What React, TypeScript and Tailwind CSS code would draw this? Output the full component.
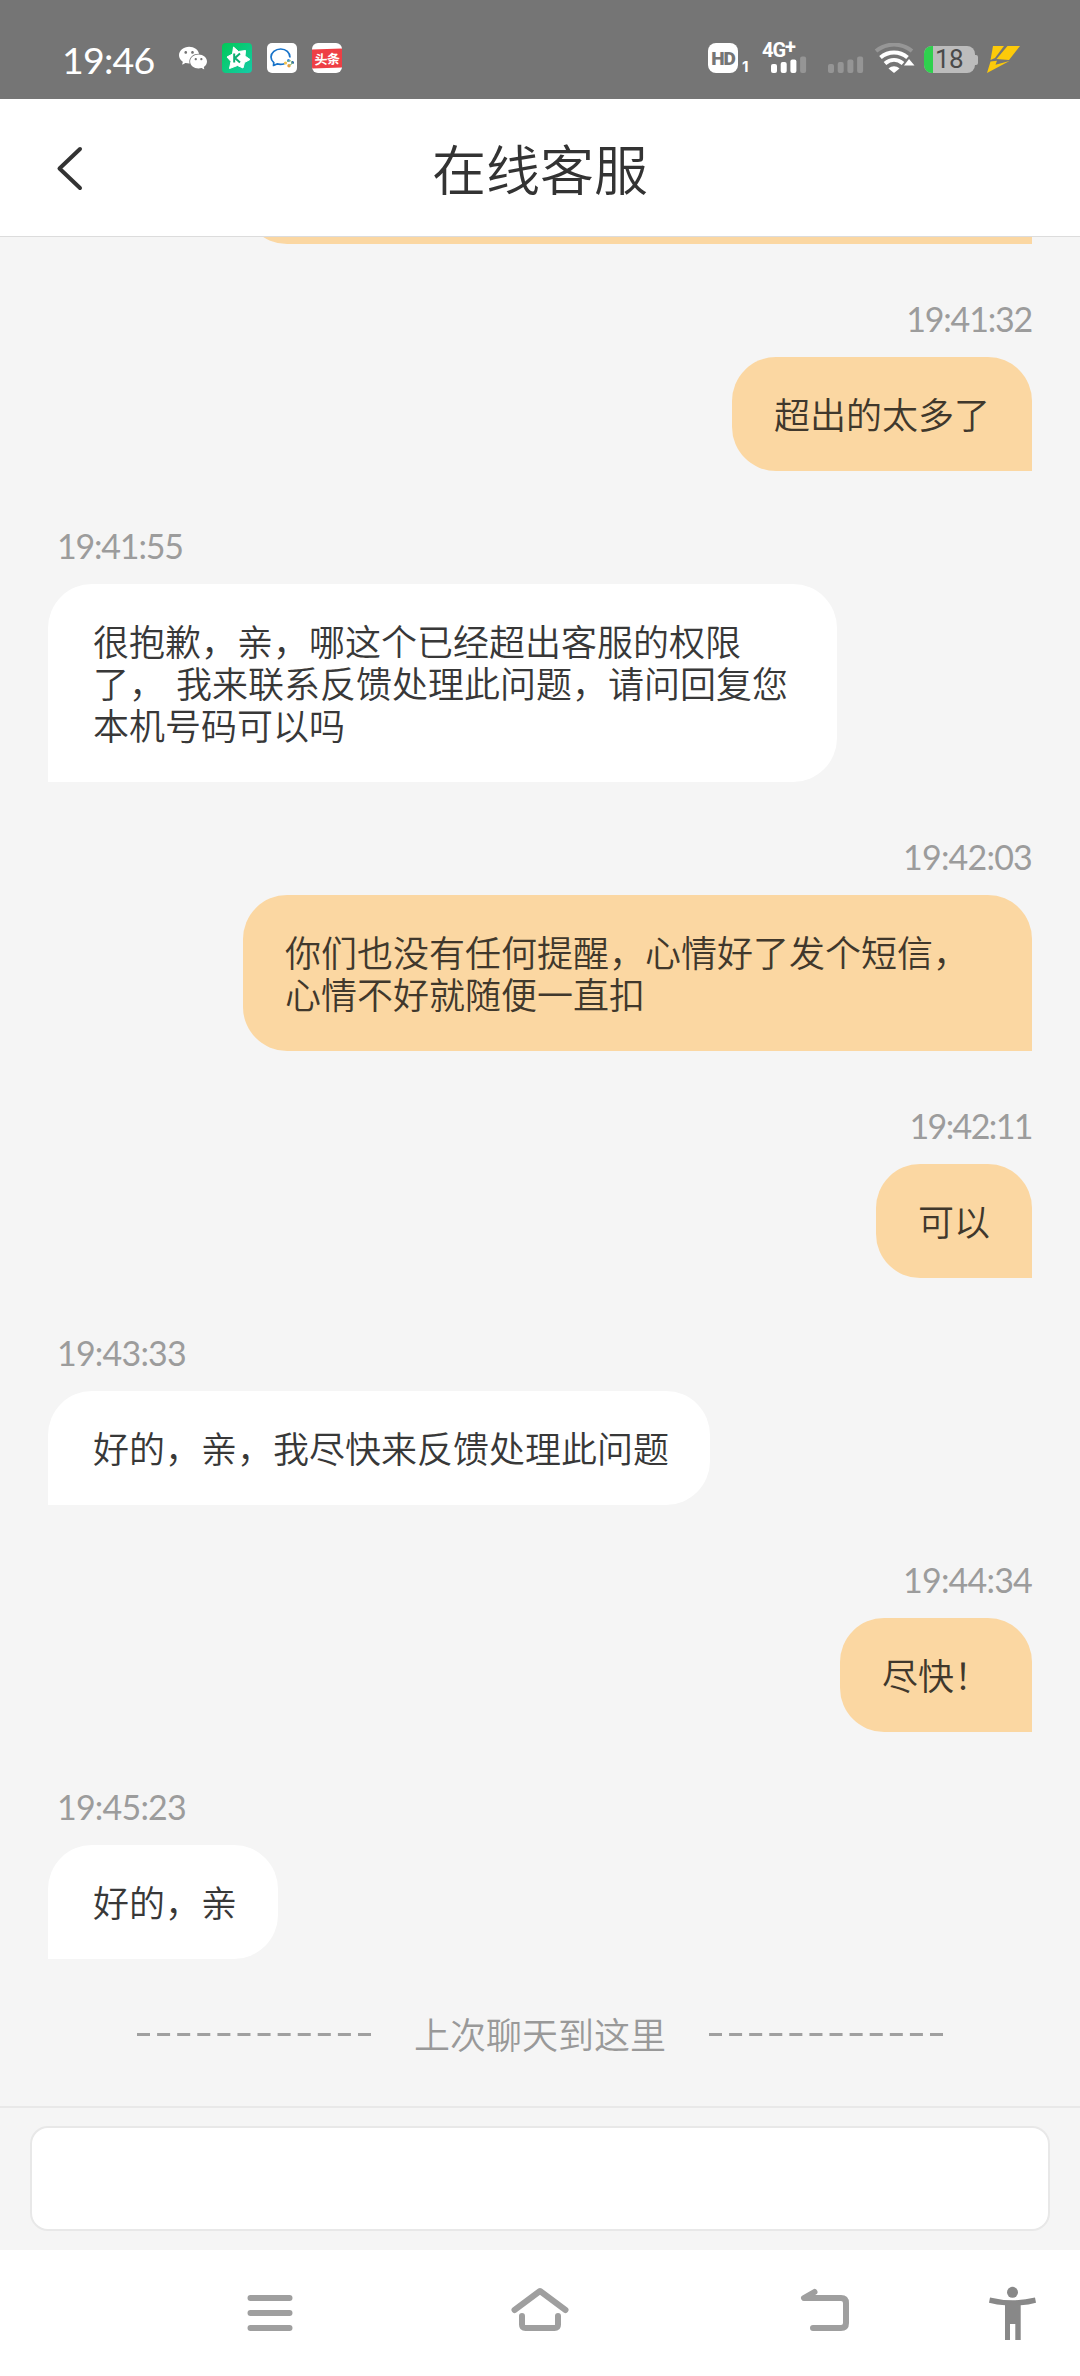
import clsx from "clsx";
import { AiFillWechat } from "react-icons/ai";

type Message = {
  time: string;
  text: string;
  mine?: boolean;
  tracking?: string;
};

const messages: Message[] = [
  { time: "19:41:32", text: "超出的太多了", mine: true, tracking: "tracking-[-1.2px]" },
  { time: "19:41:55", text: "很抱歉，亲，哪这个已经超出客服的权限了， 我来联系反馈处理此问题，请问回复您本机号码可以吗", tracking: "tracking-[-1.2px]" },
  { time: "19:42:03", text: "你们也没有任何提醒，心情好了发个短信，心情不好就随便一直扣", mine: true },
  { time: "19:42:11", text: "可以", mine: true, tracking: "tracking-[-1.6px]" },
  { time: "19:43:33", text: "好的，亲，我尽快来反馈处理此问题" },
  { time: "19:44:34", text: "尽快！", mine: true },
  { time: "19:45:23", text: "好的，亲" },
];

function AppIcons() {
  return (
    <div className="flex items-center gap-[15px]">
      <AiFillWechat className="size-[32px] -mr-[2px] text-white" />
      <svg width="30" height="30" viewBox="0 0 30 30">
        <defs>
          <linearGradient id="green" x1="0" y1="0" x2="1" y2="1">
            <stop offset="0" stopColor="#02c957" />
            <stop offset="1" stopColor="#16cba8" />
          </linearGradient>
        </defs>
        <rect width="30" height="30" rx="4" fill="url(#green)" />
        <path
          d="M11.500 4l5 4.500 7-1-.5 5.500 5 3.500-5.500 3-1.500 5.500-5.500-2.500-8 3 1.500-7-4-4.500 5.500-3z"
          fill="#fff"
          stroke="#fff"
          strokeWidth="1"
          strokeLinejoin="round"
        />
        <path d="M12.200 10.500v9M18 10.500l-5 4.500 5 4.500" fill="none" stroke="#0cae72" strokeWidth="2" />
      </svg>
      <svg width="30" height="30" viewBox="0 0 30 30">
        <rect width="30" height="30" rx="5" fill="#fff" />
        <path
          d="M23 14.500c0-5-4-8.500-9.300-8.500S4 9.600 4 14c0 2.500 1.200 4.300 2.800 5.700L6.500 22.500l3.500-1.600c3 .8 5 .6 7.500-.2"
          fill="none"
          stroke="#1873c9"
          strokeWidth="1.700"
          strokeLinejoin="round"
        />
        <circle cx="21.500" cy="17.500" r="1.500" fill="#2f86dd" />
        <circle cx="25.500" cy="19.500" r="1.500" fill="#1f5fa8" />
        <circle cx="18.500" cy="20" r="1.600" fill="#f2c14b" />
        <circle cx="22" cy="22.800" r="1.700" fill="#ec9c3c" />
        <path d="M20 18.500l3.500-1 2 3-3.500 2" fill="none" stroke="#8fc27a" strokeWidth="1" />
      </svg>
      <div className="flex h-[30px] w-[30px] items-center overflow-hidden rounded-[6px] bg-white">
        <div className="flex h-[19px] w-full -skew-y-2 items-center justify-center bg-[#ee3f45] text-[13px] leading-none font-bold tracking-[-0.5px] text-white">
          头条
        </div>
      </div>
    </div>
  );
}

function SignalBars({ active }: { active: number }) {
  const heights = [9, 11, 13.5, 16.5];
  return (
    <svg width="36" height="17" viewBox="0 0 36 17">
      {heights.map((h, i) => (
        <rect
          key={h}
          x={i * 9.7}
          y={17 - h}
          width="6"
          height={h}
          rx="2"
          fill={i < active ? "#fff" : "#959595"}
        />
      ))}
    </svg>
  );
}

function StatusBar() {
  return (
    <div className="flex h-[99px] items-center justify-between bg-[#757575] pt-[17px] pr-[60px] pl-[62px]">
      <div className="flex items-center">
        <span className="mt-[3px] w-[115px] font-[Lato,sans-serif] text-[37.500px] leading-none font-normal tracking-[-0.8px] text-white">
          19:46
        </span>
        <AppIcons />
      </div>

      <div className="flex h-[30px] items-end">
        <div className="flex h-[30px] w-[30px] items-center justify-center rounded-[8px] bg-white font-[Roboto,sans-serif] text-[19px] leading-none font-black tracking-[-1px] text-[#757575]">
          HD
        </div>
        <span className="ml-[4px] w-[10px] font-[Inter,sans-serif] text-[15px] leading-[13px] font-bold text-white">1</span>
        <div className="ml-[10px] flex h-[30px] w-[46px] flex-col justify-between">
          <span className="font-[Roboto,sans-serif] text-[20px] leading-[14px] font-bold tracking-[-1px] text-white">
            4G<span className="relative -top-[3px]">+</span>
          </span>
          <div className="-mt-[4px] ml-[9px]">
            <SignalBars active={3} />
          </div>
        </div>
        <div className="ml-[20px]">
          <SignalBars active={0} />
        </div>
        {/* wifi */}
        <svg className="ml-[10px]" width="42" height="30" viewBox="0 0 42 30" fill="none" strokeWidth="4">
          <path d="M2 8C13 -.6 27 -.6 38 8" stroke="#969696" />
          <path d="M6.500 14.500C14.500 7.800 25.500 7.800 33.500 14.500" stroke="#fff" />
          <path d="M11 20.500c5.500-4.800 12.500-4.800 18 0" stroke="#fff" />
          <path d="M14.500 25.500c3.500-3 7.500-3 11 0L20 30z" fill="#fff" />
          <path d="M30 22.500l5-6.500 5.500 6.500z" fill="#fff" />
        </svg>
        {/* battery */}
        <div className="ml-[8px] flex h-[30px] items-center">
          <div className="mt-[3px] flex h-[27px] w-[51px] items-center rounded-[8px] bg-[#bcbcbc]">
            <div className="h-full w-[9px] rounded-l-[8px] bg-[#2fd14e]" />
            <span className="ml-[2px] font-[Roboto,sans-serif] text-[26px] leading-[27px] font-normal tracking-[-0.5px] text-[#4a4a4a]">18</span>
          </div>
          <div className="mt-[3px] h-[10px] w-[3px] rounded-r-[2px] bg-[#bcbcbc]" />
        </div>
        <svg className="ml-[9px]" width="33" height="27" viewBox="0 0 33 27" fill="#fdca0a">
          <path d="M6 0h11L8 12 3.500 14z" />
          <path d="M20.500 0H33L22 14 9.500 13z" />
          <path d="M3.500 15.500l6.500-.8-1.500 4 14-3.700L0 27z" />
        </svg>
      </div>
    </div>
  );
}

function Header() {
  return (
    <header className="grid h-[137px] grid-cols-[1fr_auto_1fr] items-center bg-white">
      <svg className="ml-[55px]" width="30" height="46" viewBox="0 0 30 46">
        <path d="M25 4L4.500 23.500 25 43" fill="none" stroke="#333" strokeWidth="4" strokeLinecap="round" strokeLinejoin="round" />
      </svg>
      <h1 className="pt-px text-[54px] leading-none text-[#333]">在线客服</h1>
    </header>
  );
}

function Bubble({ message }: { message: Message }) {
  const { time, text, mine, tracking } = message;

  return (
    <div className={clsx("flex flex-col", mine ? "items-end" : "items-start")}>
      <time
        className={clsx(
          "mt-[54px] mb-[17px] font-[Lato,sans-serif] text-[34px] leading-[42px] font-normal text-[#9c9c9c]",
          mine ? "" : "ml-[9px]",
          tracking ?? "tracking-[-0.8px]"
        )}
      >
        {time}
      </time>
      <p
        className={clsx(
          "max-w-[789px] rounded-[44px] pt-[35px] pb-[37px] text-[36px] leading-[42px] [word-spacing:3px]",
          mine
            ? "rounded-br-none bg-[#fbd7a2] px-[42px] text-[#40382c]"
            : "rounded-bl-none bg-white pr-[41px] pl-[45px] text-[#383838]"
        )}
      >
        {text}
      </p>
    </div>
  );
}

function Dashes() {
  return (
    <svg width="234" height="3" viewBox="0 0 234 3">
      <path d="M0 1.500H234" stroke="#a0a0a0" strokeWidth="3" strokeDasharray="13 7.090" />
    </svg>
  );
}

function NavBar() {
  return (
    <nav className="flex h-[126px] items-center bg-white pl-[240px]">
      <svg width="60" height="60" viewBox="240 2283 60 60" fill="none" stroke="#9f9f9f" strokeWidth="6" strokeLinecap="round">
        <path d="M250.500 2298h39M250.500 2313h39M250.500 2328h39" />
      </svg>
      <svg className="ml-[210px]" width="60" height="60" viewBox="510 2283 60 60" fill="none" stroke="#9f9f9f" strokeWidth="6" strokeLinecap="round" strokeLinejoin="round">
        <path d="M514.500 2310L540 2291l25.500 19" />
        <path d="M522 2316v8.500q0 3.500 3.500 3.500h29q3.500 0 3.500-3.500V2316" />
      </svg>
      <svg className="ml-[225px]" width="60" height="60" viewBox="795 2283 60 60" fill="none" stroke="#9f9f9f" strokeWidth="6" strokeLinecap="round" strokeLinejoin="round">
        <path d="M814.500 2292L804 2298H841q5 0 5 5v20q0 5-5 5H813" />
      </svg>
      <svg className="ml-[128px]" width="60" height="60" viewBox="983 2283 60 60" fill="#888">
        <circle cx="1012.500" cy="2292.300" r="5.500" />
        <path d="M990 2297.500q22.500 5.500 45 0l1 5.200q-7.500 2-15.300 2.600V2340h-5.400v-16h-5.300v16h-5V2305.300q-8-.6-16-2.600z" />
      </svg>
    </nav>
  );
}

export default function App() {
  return (
    <div className="flex h-[2376px] w-[1080px] flex-col overflow-hidden bg-[#f5f5f5] font-['Noto_Sans_CJK_SC',sans-serif] font-[350]">
      <StatusBar />
      <Header />

      <main className="flex flex-1 flex-col border-t border-[#dcdcdc] px-[48px]">
        {/* tail of the previous message, scrolled under the header */}
        <div className="flex h-[7px] flex-none flex-col items-end justify-end overflow-hidden">
          <div className="h-[114px] w-[789px] flex-none rounded-l-[44px] bg-[#fbd7a2]" />
        </div>

        {messages.map((message) => (
          <Bubble key={message.time} message={message} />
        ))}

        <div className="mt-[55px] flex items-center justify-center gap-[43px] text-[36px] leading-[42px] text-[#999]">
          <Dashes />
          <span className="-mt-[2px]">上次聊天到这里</span>
          <Dashes />
        </div>
      </main>

      <footer className="h-[144px] border-t-2 border-[#e8e8e8] px-[30px] pt-[18px]">
        <input className="h-[105px] w-full rounded-[18px] border-2 border-[#e8e8e8] bg-white px-6 text-[36px] outline-none" />
      </footer>

      <NavBar />
    </div>
  );
}
